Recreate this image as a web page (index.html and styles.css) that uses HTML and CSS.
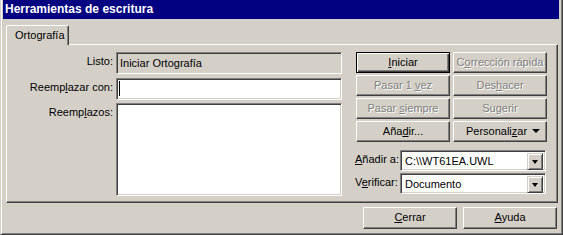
FILE: index.html
```html
<!DOCTYPE html>
<html lang="es">
<head>
<meta charset="utf-8">
<title>Herramientas de escritura</title>
<link rel="stylesheet" href="styles.css">
</head>
<body>
<div class="window">
  <div class="titlebar">Herramientas de escritura</div>
  <div class="tabs"><div class="tab">Ortografía</div></div>
  <div class="panel">
    <div class="form">
      <div class="lbl row-a">Listo:</div>
      <div class="field readonly row-a">Iniciar Ortografía</div>
      <div class="lbl row-b">Reemp<u>l</u>azar con:</div>
      <div class="field row-b"><span class="caret"></span></div>
      <div class="lbl row-c">Reemp<u>l</u>azos:</div>
      <div class="field row-c"></div>
    </div>
    <div class="side">
      <div class="btns">
        <div class="btn default"><span><u>I</u>niciar</span></div>
        <div class="btn disabled"><span>C<u>o</u>rrección rápida</span></div>
        <div class="btn disabled"><span>Pasar 1 <u>v</u>ez</span></div>
        <div class="btn disabled"><span>Des<u>h</u>acer</span></div>
        <div class="btn disabled"><span>Pasar <u>s</u>iempre</span></div>
        <div class="btn disabled"><span>Sugerir</span></div>
        <div class="btn"><span>Aña<u>d</u>ir...</span></div>
        <div class="btn menu"><span>Personali<u>z</u>ar</span><span class="arrow"></span></div>
      </div>
      <div class="combos">
        <div class="clbl"><u>A</u>ñadir a:</div>
        <div class="combo"><span class="ctext">C:\\WT61EA.UWL</span><span class="dd"><span class="arrow"></span></span></div>
        <div class="clbl">V<u>e</u>rificar:</div>
        <div class="combo"><span class="ctext">Documento</span><span class="dd"><span class="arrow"></span></span></div>
      </div>
    </div>
  </div>
  <div class="footer">
    <div class="btn wide"><span><u>C</u>errar</span></div>
    <div class="btn wide"><span><u>A</u>yuda</span></div>
  </div>
</div>
</body>
</html>
```

FILE: styles.css
```css
* { box-sizing: border-box; }
html, body { margin: 0; padding: 0; background: #d4d0c8; }
body {
  font-family: "Liberation Sans", Arial, sans-serif;
  font-size: 11px;
  color: #000;
}
u { text-decoration: underline; text-underline-offset: 1px; }

.window {
  width: 563px;
  height: 235px;
  background: #d4d0c8;
  border-left: 1px solid #d4d0c8;
  border-right: 1px solid #404040;
  border-bottom: 1px solid #404040;
  box-shadow: inset 1px 0 #fff, inset -1px -1px #808080;
  padding: 0 3px 0 2px;
  display: flex;
  flex-direction: column;
}

.titlebar {
  height: 19px;
  background: #000080;
  color: #fff;
  font-weight: bold;
  font-size: 12px;
  line-height: 19px;
  padding-left: 2px;
}

.tabs {
  display: flex;
  margin-top: 6px;
  padding-left: 3px;
  position: relative;
  z-index: 1;
}
.tab {
  width: 63px;
  height: 20px;
  margin-bottom: -1px;
  background: #d4d0c8;
  border-left: 1px solid #fff;
  border-top: 1px solid #fff;
  border-right: 1px solid #404040;
  border-top-left-radius: 2px;
  border-top-right-radius: 2px;
  box-shadow: inset -1px 0 #808080;
  padding: 2px 0 0 8px;
  line-height: 14px;
}

.panel {
  margin-left: 3px;
  width: 552px;
  height: 159px;
  border-left: 1px solid #fff;
  border-top: 1px solid #fff;
  border-right: 1px solid #404040;
  border-bottom: 1px solid #404040;
  box-shadow: inset -1px -1px #808080;
  padding-top: 7px;
  display: flex;
  align-items: flex-start;
}

.form {
  display: grid;
  grid-template-columns: 106px 226px;
  grid-template-rows: 22px 26px 96px;
  column-gap: 3px;
}
.row-b { margin-top: 4px; }
.row-c { margin-top: 3px; }
.form .row-b { grid-row: 2; }
.form .row-c { grid-row: 3; }
.lbl {
  text-align: right;
  line-height: 18px;
}
.field {
  border: 1px solid;
  border-color: #808080 #fff #fff #808080;
  box-shadow: inset 1px 1px #404040, inset -1px -1px #d4d0c8;
  background: #fff;
  padding: 2px 0 0 3px;
  line-height: 16px;
}
.form .row-a { height: 22px; }
.form .row-b.field { height: 22px; }
.form .row-c.field { height: 93px; }
.field.readonly { background: #d4d0c8; }
.caret {
  display: block;
  width: 1px;
  height: 15px;
  background: #000;
  margin-left: -1px;
}

.side {
  margin-left: 14px;
  display: flex;
  flex-direction: column;
}
.btns {
  display: grid;
  grid-template-columns: 94px 94px;
  grid-auto-rows: 21px;
  column-gap: 3px;
  row-gap: 2px;
}
.btn {
  border: 1px solid;
  border-color: #fff #404040 #404040 #fff;
  box-shadow: inset -1px -1px #808080;
  background: #d4d0c8;
  display: flex;
  align-items: center;
  justify-content: center;
  white-space: nowrap;
  line-height: 13px;
  padding-bottom: 1px;
}
.btn.default {
  border: 1px solid #000;
  box-shadow: inset 1px 1px #fff, inset -1px -1px #404040, inset -2px -2px #808080;
}
.btn.disabled {
  color: #808080;
  text-shadow: 1px 1px 0 #fff;
}
.btn.menu { gap: 5px; padding-left: 6px; }
.arrow {
  width: 0;
  height: 0;
  border-left: 4px solid transparent;
  border-right: 4px solid transparent;
  border-top: 4px solid #000;
}

.combos {
  margin-top: 8px;
  display: grid;
  grid-template-columns: 44px 146px;
  grid-auto-rows: 21px;
  row-gap: 2px;
}
.clbl { line-height: 18px; margin-left: -1px; }
.combo {
  border: 1px solid;
  border-color: #808080 #fff #fff #808080;
  box-shadow: inset 1px 1px #404040, inset -1px -1px #d4d0c8;
  background: #fff;
  display: flex;
  padding: 2px;
}
.ctext { flex: 1; padding-left: 2px; line-height: 17px; }
.dd {
  width: 16px;
  height: 17px;
  border: 1px solid;
  border-color: #d4d0c8 #404040 #404040 #d4d0c8;
  box-shadow: inset 1px 1px #fff, inset -1px -1px #808080;
  background: #d4d0c8;
  display: flex;
  align-items: center;
  justify-content: center;
}
.dd .arrow {
  border-left-width: 3.5px;
  border-right-width: 3.5px;
}

.footer {
  margin-top: 4px;
  display: flex;
  justify-content: flex-end;
  gap: 6px;
  padding-right: 2px;
}
.btn.wide { width: 94px; height: 22px; }
```
